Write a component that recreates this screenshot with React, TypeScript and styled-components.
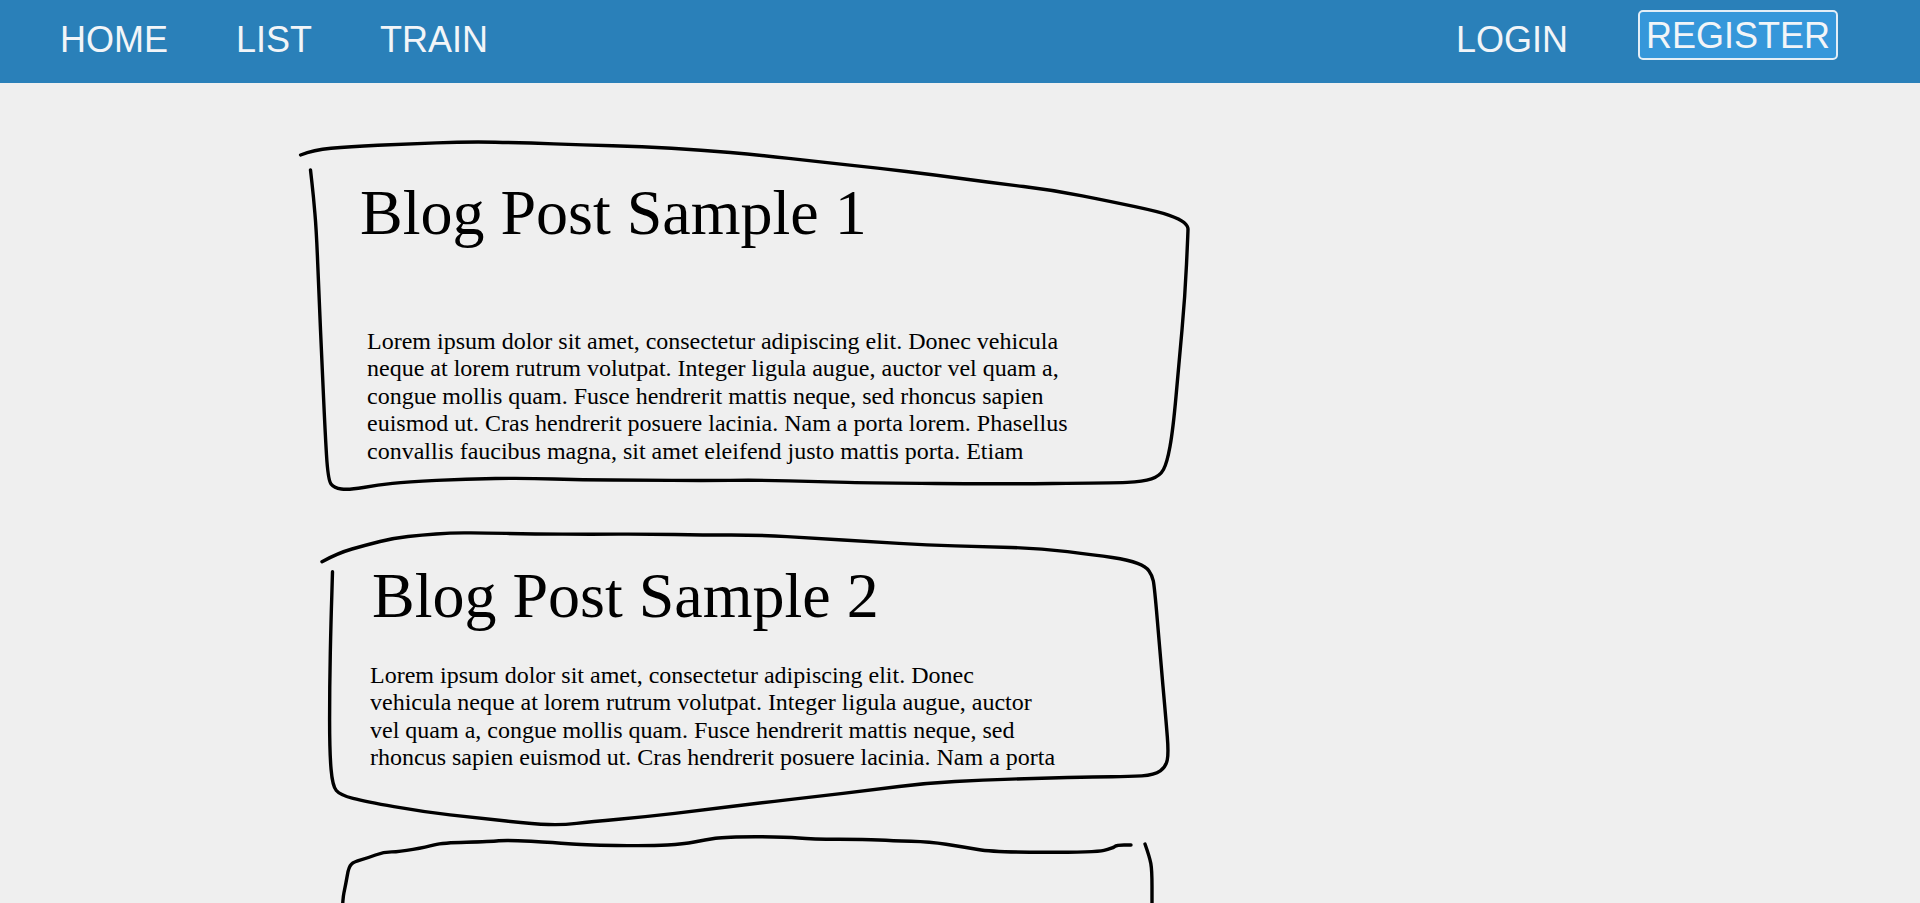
import React from "react";
import styled, { createGlobalStyle } from "styled-components";

type Pt = [number, number];

const GlobalStyle = createGlobalStyle`
  html, body {
    margin: 0;
    padding: 0;
    background: #efefef;
  }
  body {
    font-family: "Liberation Serif", "Times New Roman", serif;
    color: #000;
  }
  * { box-sizing: border-box; }
`;

const NavBar = styled.header`
  height: 83px;
  background: #2a80b9;
  display: flex;
  align-items: flex-start;
  justify-content: space-between;
  padding: 0 82px 0 60px;
  font-family: "Liberation Sans", Arial, sans-serif;
`;

const NavGroup = styled.nav`
  display: flex;
  align-items: flex-start;
  gap: ${(p: { $gap: number }) => p.$gap}px;
`;

const NavLink = styled.a`
  margin-top: 19px;
  font-size: 36px;
  line-height: 1.15;
  color: #f2f5f8;
  text-decoration: none;
  text-transform: uppercase;
  cursor: pointer;
`;

const RegisterButton = styled.a`
  margin-top: 10px;
  padding: 3px 6px 2px;
  font-size: 36px;
  line-height: 1.15;
  color: #f2f5f8;
  text-decoration: none;
  background: #3597da;
  border: 2px solid #e3eef7;
  border-radius: 5px;
  cursor: pointer;
`;

const Feed = styled.main`
  display: flex;
  flex-direction: column;
  padding: 57px 0 40px 300px;
`;

const PostCard = styled.article<{ $h: number; $pt: number; $pl: number }>`
  position: relative;
  width: 890px;
  height: ${(p) => p.$h}px;
  padding: ${(p) => p.$pt}px 0 0 ${(p) => p.$pl}px;
`;

const Outline = styled.svg`
  position: absolute;
  left: 0;
  top: 0;
  width: 100%;
  height: 100%;
  overflow: visible;
  pointer-events: none;
`;

const PostTitle = styled.h2`
  position: relative;
  margin: 0;
  font-family: "Liberation Serif", "Times New Roman", serif;
  font-size: 64px;
  font-weight: 400;
  line-height: 1.15;
  white-space: nowrap;
`;

const PostBody = styled.p<{ $x: number; $top: number; $w: number; $lines: number }>`
  position: relative;
  margin: ${(p) => p.$top}px 0 0 ${(p) => p.$x}px;
  width: ${(p) => p.$w}px;
  max-height: ${(p) => p.$lines * 27.6}px;
  overflow: hidden;
  font-family: "Liberation Serif", "Times New Roman", serif;
  font-size: 24px;
  line-height: 27.6px;
`;

const smooth = (pts: Pt[]) => {
  let d = `M${pts[0][0]} ${pts[0][1]}`;
  for (let i = 1; i < pts.length - 1; i++) {
    const [x, y] = pts[i];
    const [nx, ny] = pts[i + 1];
    d += ` Q${x} ${y} ${((x + nx) / 2).toFixed(1)} ${((y + ny) / 2).toFixed(1)}`;
  }
  const last = pts[pts.length - 1];
  d += ` L${last[0]} ${last[1]}`;
  return d;
};

const LOREM =
  "Lorem ipsum dolor sit amet, consectetur adipiscing elit. Donec vehicula neque at lorem rutrum volutpat. Integer ligula augue, auctor vel quam a, congue mollis quam. Fusce hendrerit mattis neque, sed rhoncus sapien euismod ut. Cras hendrerit posuere lacinia. Nam a porta lorem. Phasellus convallis faucibus magna, sit amet eleifend justo mattis porta. Etiam consequat tincidunt lectus, vitae dictum nibh ultricies at. Sed blandit nunc sed ligula feugiat, at pulvinar arcu gravida.";

type Post = {
  title: string;
  h: number;
  pt: number;
  pl: number;
  bodyTop: number;
  bodyX: number;
  bodyW: number;
  lines: number;
  strokes: Pt[][];
};

const posts: Post[] = [
  {
    title: "Blog Post Sample 1",
    h: 370,
    pt: 36,
    pl: 60,
    bodyTop: 78,
    bodyX: 7,
    bodyW: 720,
    lines: 5,
    strokes: [
      [
        [0.6, 15], [13.5, 10], [48.7, 6.7], [107, 4], [166, 1.7], [224.7, 2.7], [283, 5],
        [342, 6.7], [401, 10], [459.5, 15], [518, 21.7], [577, 28], [635.5, 35], [694, 43],
        [753, 50], [811.6, 61.7], [858.5, 71.7], [880, 79], [888, 86], [888, 92],
        [885, 156.7], [879, 223], [873, 290], [867, 323], [860, 336], [843, 341.7],
        [811.6, 343], [694, 344], [577, 343], [518, 341.7], [459.5, 340], [401, 340.7],
        [342, 340], [283, 340], [224.7, 338], [166, 339], [107, 341.7], [78, 345],
        [48.7, 350], [34, 348], [28, 340], [25, 290], [22, 223], [19, 156.7],
        [16.4, 90], [13.5, 56.7], [10.5, 30],
      ],
    ],
  },
  {
    title: "Blog Post Sample 2",
    h: 324,
    pt: 49,
    pl: 72,
    bodyTop: 29,
    bodyX: -2,
    bodyW: 688,
    lines: 4,
    strokes: [
      [
        [22, 51.7], [38, 43], [66, 35], [94, 28], [122, 25], [150, 23], [178, 22.7],
        [234.5, 24], [290.6, 24.3], [346.7, 24], [403, 25], [459, 25], [515, 28.3],
        [571, 31.7], [627, 35], [683, 36.7], [739.5, 38.3], [795.6, 45], [829, 50],
        [846, 56.7], [852, 65], [854.5, 76.7], [860, 143], [866, 210], [868.6, 243],
        [866, 256.7], [854.5, 265], [829, 266.7], [795.6, 266.7], [739.5, 268.3],
        [683, 270], [627, 273], [571, 280], [515, 286.7], [459, 293], [403, 300],
        [346.7, 306.7], [290.6, 311.7], [262.5, 315], [234.5, 314], [178, 308],
        [122, 301.7], [66, 291.7], [40, 285], [32.5, 276], [29.6, 243], [29.6, 176.7],
        [31, 110], [32.5, 61.7],
      ],
    ],
  },
  {
    title: "Blog Post Sample 3",
    h: 320,
    pt: 75,
    pl: 80,
    bodyTop: 29,
    bodyX: -2,
    bodyW: 688,
    lines: 4,
    strokes: [
      [
        [40, 286], [41, 166], [41.8, 69], [46, 49], [48.7, 32.7], [54, 27.7], [67.5, 24],
        [83.6, 18], [99.6, 17.7], [126.4, 13], [142.5, 8.7], [190.7, 7.7], [206.8, 6],
        [255, 8.7], [281.7, 11], [351, 12], [383.5, 10], [405, 6], [426, 2.7], [485, 2.7],
        [512, 5.3], [565.6, 5.3], [592, 6.7], [630, 7.7], [662, 12.7], [694, 18.3],
        [796, 18.3], [812, 14.3], [817, 11], [831, 11],
      ],
      [
        [845, 10], [849.5, 22.7], [852, 36], [852, 69], [852, 266],
      ],
    ],
  },
];

export default function App() {
  return (
    <>
      <GlobalStyle />
      <NavBar>
        <NavGroup $gap={68}>
          <NavLink>Home</NavLink>
          <NavLink>List</NavLink>
          <NavLink>Train</NavLink>
        </NavGroup>
        <NavGroup $gap={70}>
          <NavLink>Login</NavLink>
          <RegisterButton>REGISTER</RegisterButton>
        </NavGroup>
      </NavBar>
      <Feed>
        {posts.map((post) => (
          <PostCard key={post.title} $h={post.h} $pt={post.pt} $pl={post.pl}>
            <Outline viewBox={`0 0 890 ${post.h}`} preserveAspectRatio="none">
              {post.strokes.map((s, i) => (
                <path
                  key={i}
                  d={smooth(s)}
                  fill="none"
                  stroke="#000"
                  strokeWidth={3.4}
                  strokeLinecap="round"
                  strokeLinejoin="round"
                />
              ))}
            </Outline>
            <PostTitle>{post.title}</PostTitle>
            <PostBody $x={post.bodyX} $top={post.bodyTop} $w={post.bodyW} $lines={post.lines}>
              {LOREM}
            </PostBody>
          </PostCard>
        ))}
      </Feed>
    </>
  );
}
